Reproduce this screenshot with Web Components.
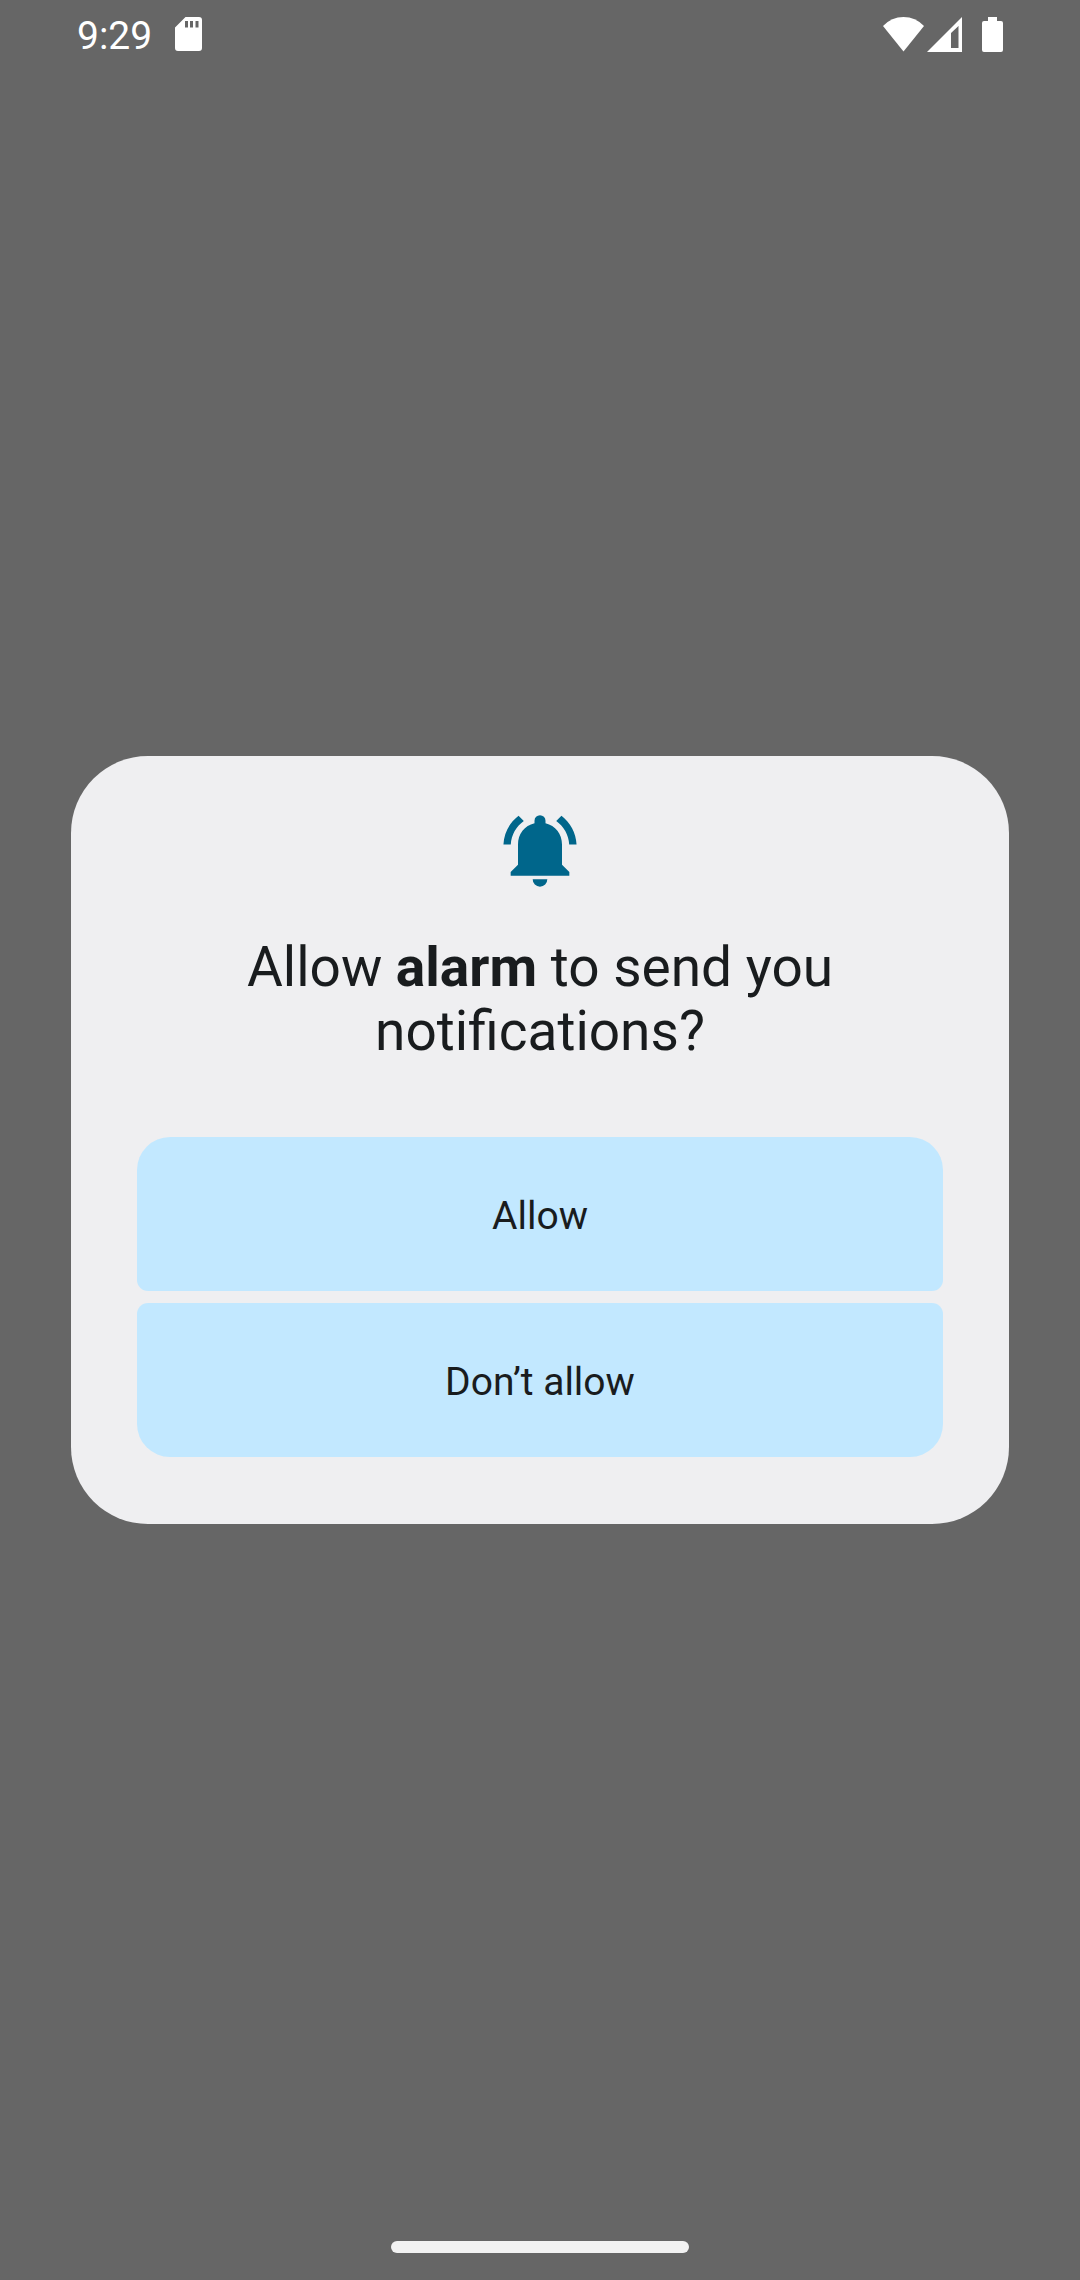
<!DOCTYPE html>
<html lang="en">
<head>
<meta charset="utf-8">
<meta name="viewport" content="width=device-width, initial-scale=1">
<title>Notification permission</title>
<style>
  html, body { margin: 0; height: 100%; }
  body { background: #666666; font-family: Roboto, "Noto Sans", sans-serif; color: #191c1e; }
</style>
</head>
<body>
<phone-screen>
  <status-bar slot="top" time="9:29"></status-bar>
  <permission-dialog>
    <span slot="title">Allow <b>alarm</b> to send you <span>notifications?</span></span>
    <dialog-button slot="actions" place="first">Allow</dialog-button>
    <dialog-button slot="actions" place="last">Don’t allow</dialog-button>
  </permission-dialog>
  <gesture-bar slot="bottom"></gesture-bar>
</phone-screen>
<script>
class BaseElement extends HTMLElement {
  constructor() {
    super();
    this.attachShadow({ mode: "open" }).innerHTML = this.constructor.markup;
  }
}

class PhoneScreen extends BaseElement {
  static markup = `
    <style>
      :host { display: flex; flex-direction: column; min-height: 100vh; }
      main { flex: 1; display: flex; flex-direction: column; justify-content: center; padding: 0 71px; }
    </style>
    <slot name="top"></slot>
    <main><slot></slot></main>
    <slot name="bottom"></slot>`;
}

class StatusBar extends BaseElement {
  static markup = `
    <style>
      :host { display: flex; align-items: center; justify-content: space-between; box-sizing: border-box;
              height: 70px; padding: 0 77px 2px 77px; color: #fff; }
      .group { display: flex; align-items: center; }
      .start { gap: 23px; }
      time { padding-top: 4px; font-size: 39px; line-height: 46px; }
      svg { display: block; fill: currentColor; }
      .end { gap: 3px; }
      .battery { margin-left: 17px; }
    </style>
    <div class="group start">
      <time></time>
      <svg width="27" height="34" viewBox="0 0 27 34" aria-hidden="true">
        <path fill-rule="evenodd" d="M10.500 0H24Q27 0 27 3V31Q27 34 24 34H3Q0 34 0 31V10.500ZM10 4V10.500H13V4ZM15 4V10.500H18V4ZM20.500 4V10.500H23.500V4Z"/>
      </svg>
    </div>
    <div class="group end">
      <svg width="41" height="35" viewBox="0 0 41 35" aria-hidden="true"><path d="M0 9Q8.500 0 20.500 0T41 9L20.500 34.500Z"/></svg>
      <svg width="35" height="35" viewBox="0 0 35 35" aria-hidden="true"><path fill-rule="evenodd" d="M0 35 35 0V35ZM24 16V31H31.500V9Z"/></svg>
      <svg class="battery" width="21" height="35" viewBox="0 0 21 35" aria-hidden="true"><path d="M6 0H15V4H19Q21 4 21 6V33Q21 35 19 35H2Q0 35 0 33V6Q0 4 2 4H6Z"/></svg>
    </div>`;
  connectedCallback() {
    this.shadowRoot.querySelector("time").textContent = this.getAttribute("time");
  }
}

class PermissionDialog extends BaseElement {
  static markup = `
    <style>
      :host { display: block; }
      section { display: flex; flex-direction: column; align-items: center; padding: 50px 66px 67px;
                border-radius: 77px; background: #efeff1; }
      svg { display: block; fill: #00668b; }
      h1 { margin: 41px 0 74px; max-width: 700px; font-size: 55px; line-height: 64px; font-weight: 400; text-align: center; }
      .actions { align-self: stretch; display: flex; flex-direction: column; gap: 12px; }
    </style>
    <section role="dialog" aria-labelledby="title">
      <svg width="88" height="88" viewBox="0 0 24 24" aria-hidden="true">
        <path d="M7.580 4.080 6.150 2.650C3.750 4.480 2.170 7.300 2.030 10.500h2c.15-2.650 1.510-4.970 3.550-6.420zM19.970 10.500h2c-.15-3.200-1.730-6.020-4.120-7.850l-1.420 1.430c2.020 1.450 3.390 3.770 3.540 6.420z"/>
        <path d="M18 10.500C18 7.600 16.200 5.300 13.500 4.680V4a1.500 1.500 0 0 0-3 0v.68C7.800 5.300 6 7.600 6 10.500V16l-2 2v1h16v-1l-2-2zM12 22a2 2 0 0 0 2-2h-4a2 2 0 0 0 2 2z"/>
      </svg>
      <h1 id="title"><slot name="title"></slot></h1>
      <div class="actions"><slot name="actions"></slot></div>
    </section>`;
}

class DialogButton extends BaseElement {
  static markup = `
    <style>
      :host { display: block; }
      button { display: block; width: 100%; margin: 0; padding: 56px 32px 52px; border: 0; border-radius: 11px;
               background: #c2e8ff; color: inherit; font-family: inherit; font-size: 39px; line-height: 46px; cursor: pointer; }
      :host([place="first"]) button { border-top-left-radius: 33px; border-top-right-radius: 33px; }
      :host([place="last"]) button { border-bottom-left-radius: 33px; border-bottom-right-radius: 33px; }
    </style>
    <button type="button"><slot></slot></button>`;
}

class GestureBar extends BaseElement {
  static markup = `
    <style>
      :host { display: flex; justify-content: center; align-items: center; box-sizing: border-box; height: 70px; padding-top: 4px; }
      span { width: 298px; height: 12px; border-radius: 6px; background: #f2f2f2; }
    </style>
    <span></span>`;
}

customElements.define("phone-screen", PhoneScreen);
customElements.define("status-bar", StatusBar);
customElements.define("permission-dialog", PermissionDialog);
customElements.define("dialog-button", DialogButton);
customElements.define("gesture-bar", GestureBar);
</script>
</body>
</html>
